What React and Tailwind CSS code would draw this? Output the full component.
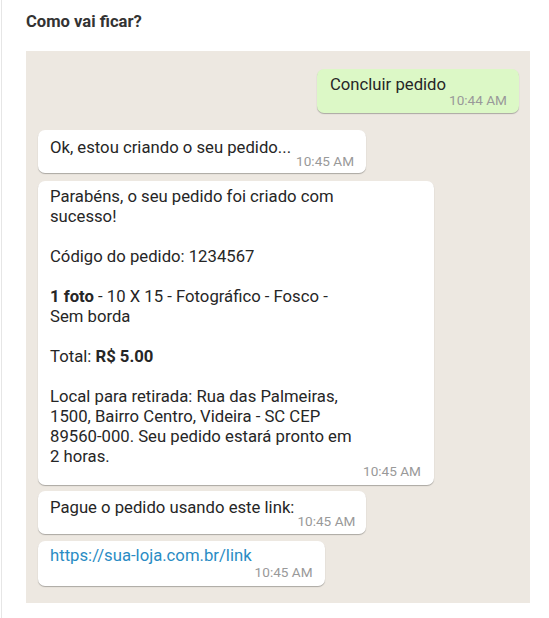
import React from 'react';

const Time = ({ children, className = '' }) => (
  <span className={`text-[13.6px] leading-[16px] text-[#999] whitespace-nowrap ${className}`}>{children}</span>
);

const Bubble = ({ children, className = '' }) => (
  <div className={`rounded-[7px] shadow-[0_1px_1px_rgba(0,0,0,0.28)] ${className}`}>{children}</div>
);

export default function App() {
  return (
    <div className="min-h-[618px] bg-white font-['Roboto',sans-serif] text-[#262626]">
      <div className="ml-px border-l border-[#e6e6e6] pl-6 pt-3 pb-[15px] min-h-[618px]">
        <h2 className="text-[16.6px] leading-[20px] font-bold text-[#333]">Como vai ficar?</h2>

        <div className="mt-[19px] w-[504px] bg-[#ede8e1] pl-3 pr-[11px] pt-[18px] pb-[17px] flex flex-col">
          <Bubble className="self-end bg-[#dcf8c6] pl-[13px] pr-3 pt-[6px] pb-[5px] flex items-start">
            <span className="text-[16.7px] leading-[20px]">Concluir pedido</span>
            <Time className="mt-[17px] ml-[3px]">10:44 AM</Time>
          </Bubble>

          <Bubble className="self-start mt-[17px] bg-white pl-3 pr-3 pt-[8px] pb-[4px] flex items-start">
            <span className="text-[16.7px] leading-[20px]">Ok, estou criando o seu pedido...</span>
            <Time className="mt-[15px] ml-[5px]">10:45 AM</Time>
          </Bubble>

          <Bubble className="self-start mt-2 w-[396px] bg-white pl-3 pr-[13px] pt-[6px] pb-[6px]">
            <div className="max-w-[310px] text-[16.7px] leading-[20px]">
              <p>Parabéns, o seu pedido foi criado com sucesso!</p>
              <p className="mt-5">Código do pedido: 1234567</p>
              <p className="mt-5">
                <span className="font-bold">1 foto</span> - 10 X 15 - Fotográfico - Fosco - Sem borda
              </p>
              <p className="mt-5">
                Total: <span className="font-bold">R$ 5.00</span>
              </p>
              <p className="mt-5">
                Local para retirada: Rua das Palmeiras, 1500, Bairro Centro, Videira - SC CEP 89560-000. Seu pedido estará pronto em 2 horas.
              </p>
            </div>
            <div className="-mt-[4px] flex justify-end">
              <Time>10:45 AM</Time>
            </div>
          </Bubble>

          <Bubble className="self-start mt-[6px] bg-white pl-3 pr-[11px] pt-[7px] pb-[5px] flex items-start">
            <span className="text-[16.7px] leading-[20px]">Pague o pedido usando este link:</span>
            <Time className="mt-[15px] ml-[3px]">10:45 AM</Time>
          </Bubble>

          <Bubble className="self-start mt-[7px] bg-white pl-3 pr-3 pt-[5px] pb-[6px] flex items-start">
            <span className="text-[16.7px] leading-[20px] text-[#2a8cc4]">https://sua-loja.com.br/link</span>
            <Time className="mt-[18px] ml-[3px]">10:45 AM</Time>
          </Bubble>
        </div>
      </div>
    </div>
  );
}
